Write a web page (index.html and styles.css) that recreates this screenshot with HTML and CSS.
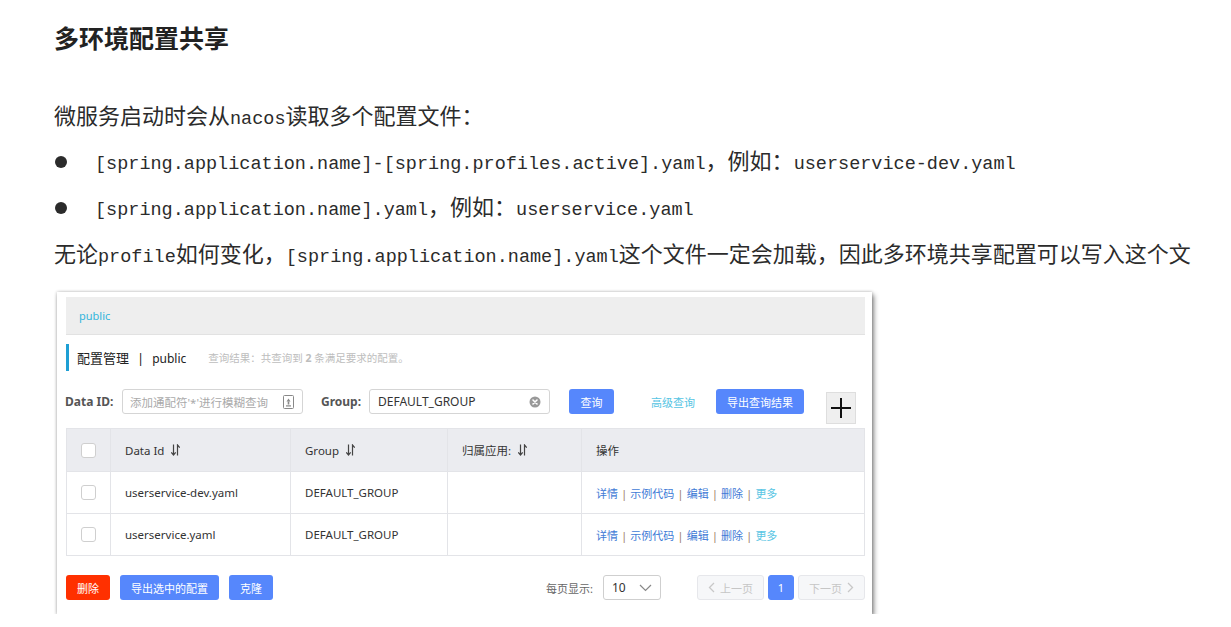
FILE: index.html
```html
<!DOCTYPE html>
<html lang="zh">
<head>
<meta charset="utf-8">
<title>多环境配置共享</title>
<link rel="stylesheet" href="styles.css">
</head>
<body>
<main class="doc">
  <h2 class="title">多环境配置共享</h2>
  <p class="para">微服务启动时会从<span class="en">nacos</span>读取多个配置文件：</p>
  <ul class="list">
    <li class="item"><span class="dot"></span><span class="txt"><span class="en">[spring.application.name]-[spring.profiles.active].yaml</span>，例如：<span class="en">userservice-dev.yaml</span></span></li>
    <li class="item"><span class="dot"></span><span class="txt"><span class="en">[spring.application.name].yaml</span>，例如：<span class="en">userservice.yaml</span></span></li>
  </ul>
  <p class="para">无论<span class="en">profile</span>如何变化，<span class="en">[spring.application.name].yaml</span>这个文件一定会加载，因此多环境共享配置可以写入这个文</p>

  <section class="shot">
    <div class="crumb">public</div>
    <div class="heading"><span class="h-main">配置管理<span class="bar">|</span><span class="h-ns">public</span></span><span class="h-sub">查询结果：共查询到 <b>2</b> 条满足要求的配置。</span></div>

    <div class="search">
      <label class="lbl lbl-id">Data ID:</label>
      <div class="input input-id"><span class="ph">添加通配符'*'进行模糊查询</span>
        <svg class="ico" width="11" height="14" viewBox="0 0 11 14"><rect x="0.5" y="0.5" width="10" height="13" rx="1" fill="#fff" stroke="#888"/><path d="M5.5 3.5 L3.5 6.5 H7.5 Z" fill="#888"/><rect x="4.7" y="6.5" width="1.6" height="3" fill="#888"/><rect x="3" y="10.3" width="5" height="1.2" fill="#888"/></svg>
      </div>
      <label class="lbl lbl-group">Group:</label>
      <div class="input input-group"><span class="val">DEFAULT_GROUP</span>
        <svg class="ico" width="12" height="12" viewBox="0 0 12 12"><circle cx="6" cy="6" r="5.5" fill="#999"/><path d="M4 4 L8 8 M8 4 L4 8" stroke="#fff" stroke-width="1.6" stroke-linecap="round"/></svg>
      </div>
      <button class="btn btn-query">查询</button>
      <a class="link-adv">高级查询</a>
      <button class="btn btn-export">导出查询结果</button>
      <div class="plus"><svg width="22" height="22" viewBox="0 0 22 22"><path d="M11 1 V21 M1 11 H21" stroke="#111" stroke-width="2"/></svg></div>
    </div>

    <table class="grid">
      <colgroup><col class="c-chk"><col class="c-id"><col class="c-grp"><col class="c-app"><col></colgroup>
      <thead>
        <tr>
          <th class="chk-cell"><span class="chk"></span></th>
          <th>Data Id <svg class="sort" width="9" height="12" viewBox="0 0 9 12"><path d="M2.5 0.5 V11 M0.3 8.3 L2.5 11 L4.7 8.3" fill="none" stroke="#444" stroke-width="1.2"/><path d="M6.5 11.5 V1 L8.7 3.7" fill="none" stroke="#444" stroke-width="1.2"/></svg></th>
          <th>Group <svg class="sort" width="9" height="12" viewBox="0 0 9 12"><path d="M2.5 0.5 V11 M0.3 8.3 L2.5 11 L4.7 8.3" fill="none" stroke="#444" stroke-width="1.2"/><path d="M6.5 11.5 V1 L8.7 3.7" fill="none" stroke="#444" stroke-width="1.2"/></svg></th>
          <th>归属应用: <svg class="sort" width="9" height="12" viewBox="0 0 9 12"><path d="M2.5 0.5 V11 M0.3 8.3 L2.5 11 L4.7 8.3" fill="none" stroke="#444" stroke-width="1.2"/><path d="M6.5 11.5 V1 L8.7 3.7" fill="none" stroke="#444" stroke-width="1.2"/></svg></th>
          <th>操作</th>
        </tr>
      </thead>
      <tbody>
        <tr>
          <td class="chk-cell"><span class="chk"></span></td>
          <td>userservice-dev.yaml</td>
          <td>DEFAULT_GROUP</td>
          <td></td>
          <td class="ops"><a>详情</a><i>|</i><a>示例代码</a><i>|</i><a>编辑</a><i>|</i><a>删除</a><i>|</i><a class="more">更多</a></td>
        </tr>
        <tr>
          <td class="chk-cell"><span class="chk"></span></td>
          <td>userservice.yaml</td>
          <td>DEFAULT_GROUP</td>
          <td></td>
          <td class="ops"><a>详情</a><i>|</i><a>示例代码</a><i>|</i><a>编辑</a><i>|</i><a>删除</a><i>|</i><a class="more">更多</a></td>
        </tr>
      </tbody>
    </table>

    <div class="footer">
      <div class="actions">
        <button class="btn btn-del">删除</button>
        <button class="btn btn-exp2">导出选中的配置</button>
        <button class="btn btn-clone">克隆</button>
      </div>
      <div class="pager">
        <span class="per">每页显示:</span>
        <div class="select"><span>10</span><svg width="13" height="8" viewBox="0 0 13 8"><path d="M1 1 L6.5 6.5 L12 1" fill="none" stroke="#888" stroke-width="1.2"/></svg></div>
        <button class="pg pg-prev"><svg width="7" height="11" viewBox="0 0 7 11"><path d="M6 1 L1.5 5.5 L6 10" fill="none" stroke="#c8c8c8" stroke-width="1.3"/></svg>上一页</button>
        <button class="pg pg-cur">1</button>
        <button class="pg pg-next">下一页<svg width="7" height="11" viewBox="0 0 7 11"><path d="M1 1 L5.5 5.5 L1 10" fill="none" stroke="#c8c8c8" stroke-width="1.3"/></svg></button>
      </div>
    </div>
  </section>
</main>
</body>
</html>
```

FILE: styles.css
```css
* { box-sizing: border-box; }
html, body { margin: 0; padding: 0; background: #fff; }
body { font-family: "Noto Sans CJK SC", sans-serif; color: #2b2b2b; }

.doc { padding: 14px 0 0 54px; }

.title {
  margin: 0;
  height: 46px;
  font-size: 25px;
  line-height: 46px;
  font-weight: 700;
  color: #222;
}

.para {
  margin: 33px 0 0;
  height: 46px;
  font-size: 22px;
  line-height: 42px;
  white-space: nowrap;
}
.list + .para { margin-top: 0; height: 45px; }
.en { font-family: "Liberation Mono", monospace; font-size: 18.5px; line-height: 1; }

.list { list-style: none; margin: 0; padding: 0; }
.item {
  display: flex;
  align-items: center;
  height: 46px;
  font-size: 22px;
  white-space: nowrap;
}
.txt { line-height: 40px; margin-bottom: 6px; }
.dot {
  width: 12px; height: 12px; border-radius: 50%;
  background: #2b2b2b;
  margin: 0 28px 0 1px;
  flex: none;
}

/* ---------- embedded screenshot ---------- */
.shot {
  margin: 16px 0 0 3px;
  width: 815px;
  padding: 5px 7px 14px 9px;
  background: #fff;
  box-shadow: 2px 3px 5px rgba(0,0,0,0.45), 0 0 3px rgba(0,0,0,0.25);
  font-family: "Noto Sans", "Noto Sans CJK SC", sans-serif;
  font-size: 12px;
  color: #333;
}

.crumb {
  height: 38px;
  background: #eeeeee;
  border-bottom: 1px solid #e2e2e2;
  padding-left: 13px;
  line-height: 38px;
  font-size: 11px;
  color: #33b5dc;
}

.heading {
  margin-top: 9px;
  height: 27px;
  border-left: 3px solid #1e9fd4;
  display: flex;
  align-items: center;
  padding-left: 8px;
}
.h-main { font-size: 13px; color: #222; }
.h-ns { font-size: 12px; }
.bar { margin: 0 8px; }
.h-sub { margin-left: 22px; font-size: 10.5px; color: #bdbdbd; }
.h-sub b { font-weight: 700; }

.search {
  margin-top: 18px;
  display: flex;
  align-items: center;
  height: 25px;
}
.lbl { font-weight: 700; color: #555; font-size: 12px; }
.lbl-id { width: 57px; margin-left: -1px; }
.lbl-group { width: 48px; margin-left: 18px; }
.input {
  height: 25px;
  border: 1px solid #d5d5d5;
  border-radius: 3px;
  display: flex;
  align-items: center;
  justify-content: space-between;
  padding: 0 8px 0 7px;
}
.input-id { width: 181px; }
.input-group { width: 181px; padding-left: 8px; }
.ph { color: #aaa; font-size: 11.5px; }
.val { color: #333; font-size: 12px; }
.ico { display: block; }

.btn {
  border: 0;
  border-radius: 3px;
  background: #5687fc;
  color: #fff;
  font-family: inherit;
  font-size: 11px;
  height: 25px;
  padding: 0;
}
.btn-query { width: 45px; margin-left: 19px; }
.link-adv { margin-left: 37px; color: #55c4e3; font-size: 11px; }
.btn-export { width: 88px; margin-left: 21px; }
.plus {
  width: 30px; height: 32px;
  margin-left: 22px;
  align-self: flex-start;
  margin-top: 3px;
  background: #efefef;
  border: 1px solid #dedede;
  display: flex; align-items: center; justify-content: center;
}

.grid {
  margin-top: 14px;
  width: 799px;
  border-collapse: collapse;
  table-layout: fixed;
  border: 1px solid #e3e4e8;
}
.c-chk { width: 44px; }
.c-id { width: 180px; }
.c-grp { width: 157px; }
.c-app { width: 134px; }
.grid th, .grid td {
  border: 1px solid #e3e4e8;
  text-align: left;
  font-weight: 400;
  font-size: 11.5px;
  color: #333;
  padding: 0 0 0 14px;
  white-space: nowrap;
}
.grid th { height: 43px; background: #ebecf0; }
.grid td { height: 42px; }
.grid .chk-cell { padding-left: 14px; }
.chk {
  display: block;
  width: 15px; height: 15px;
  border: 1px solid #cfcfcf;
  border-radius: 3px;
  background: #fff;
}
.sort { vertical-align: -1px; margin-left: 4px; }
.ops a { color: #3f7bd6; font-size: 11px; }
.ops a.more { color: #5ac6e4; }
.ops i { font-style: normal; color: #a0826d; margin: 0 3px; }

.footer {
  margin-top: 19px;
  display: flex;
  justify-content: space-between;
  align-items: center;
}
.actions { display: flex; gap: 10px; }
.btn-del { width: 44px; background: #ff3000; }
.btn-exp2 { width: 99px; }
.btn-clone { width: 44px; }

.pager { display: flex; align-items: center; }
.per { color: #666; font-size: 11px; margin-right: 10px; }
.select {
  width: 58px; height: 25px;
  border: 1px solid #cfcfcf;
  border-radius: 3px;
  display: flex; align-items: center; justify-content: space-between;
  padding: 0 8px 0 8px;
  color: #333;
  font-size: 12px;
  margin-right: 36px;
}
.pg {
  height: 25px;
  border: 1px solid #e6e7eb;
  border-radius: 3px;
  background: #f6f7f9;
  color: #c6c6c6;
  font-family: inherit;
  font-size: 11px;
  display: flex; align-items: center; justify-content: center;
  gap: 5px;
  padding: 0;
}
.pg-prev { width: 67px; }
.pg-cur { width: 26px; margin: 0 4px; background: #5687fc; border-color: #5687fc; color: #fff; }
.pg-next { width: 67px; }
```
